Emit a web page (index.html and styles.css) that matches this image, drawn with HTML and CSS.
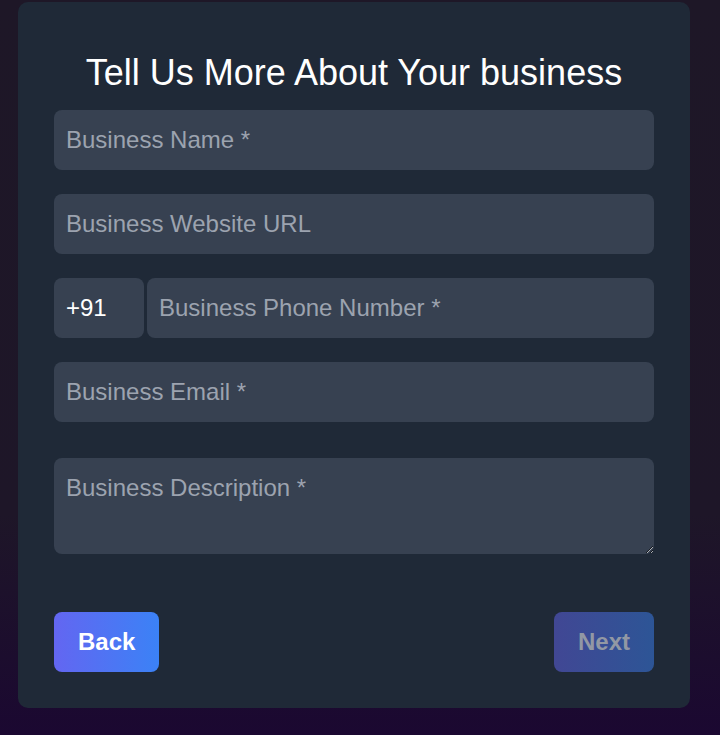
FILE: index.html
```html
<!DOCTYPE html>
<html lang="en">
<head>
<meta charset="utf-8">
<meta name="color-scheme" content="dark">
<title>Tell Us More About Your business</title>
<link rel="stylesheet" href="styles.css">
</head>
<body>
<main class="card">
  <h1 class="title">Tell Us More About Your business</h1>
  <form class="form">
    <input class="field" type="text" placeholder="Business Name *">
    <input class="field" type="text" placeholder="Business Website URL">
    <div class="phone-row">
      <input class="field code" type="text" value="+91" readonly>
      <input class="field phone" type="tel" placeholder="Business Phone Number *">
    </div>
    <input class="field" type="email" placeholder="Business Email *">
    <textarea class="field area" placeholder="Business Description *"></textarea>
    <div class="actions">
      <button type="button" class="btn">Back</button>
      <button type="button" class="btn btn-disabled" disabled>Next</button>
    </div>
  </form>
</main>
</body>
</html>
```
FILE: styles.css
```css
:root { color-scheme: dark; }
* { box-sizing: border-box; }
html, body { height: 100%; }
body {
  margin: 0;
  padding: 2px 30px 0 18px;
  background: linear-gradient(to bottom, #1e1727 0%, #1e1628 70%, #1b0831 100%);
  font-family: "Liberation Sans", Arial, sans-serif;
}
.card {
  width: 672px;
  background: #1f2937;
  border-radius: 10px;
  padding: 36px;
}
.title {
  margin: 15px 0 17px;
  font-size: 36px;
  line-height: 40px;
  font-weight: 400;
  color: #ffffff;
  text-align: center;
}
.form {
  display: flex;
  flex-direction: column;
  gap: 24px;
}
.field {
  display: block;
  width: 100%;
  height: 60px;
  padding: 0 12px;
  border: none;
  border-radius: 8px;
  background: #374151;
  color: #ffffff;
  font-family: inherit;
  font-size: 24px;
  outline: none;
}
.field::placeholder { color: #9ca3af; opacity: 1; }
.phone-row {
  display: flex;
  gap: 3px;
}
.code { width: 90px; flex: none; }
.phone { flex: 1; min-width: 0; }
.area {
  height: 96px;
  margin-top: 12px;
  padding: 16px 12px;
  line-height: 28px;
  resize: vertical;
}
.actions {
  display: flex;
  justify-content: space-between;
  margin-top: 34px;
}
.btn {
  height: 60px;
  padding: 0 24px;
  border: none;
  border-radius: 8px;
  background: linear-gradient(to right, #6366f1, #3b82f6);
  color: #ffffff;
  font-family: inherit;
  font-size: 24px;
  font-weight: 700;
  cursor: pointer;
}
.btn-disabled {
  background: linear-gradient(to right, #414794, #2d5596);
  color: #9298a4;
  cursor: not-allowed;
}
```
